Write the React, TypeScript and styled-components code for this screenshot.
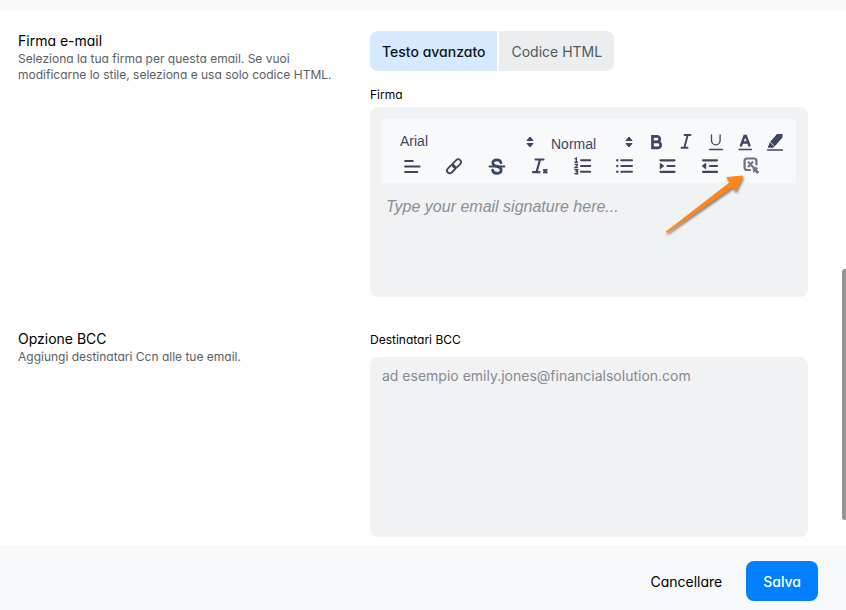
import React from "react";
import styled, { createGlobalStyle } from "styled-components";

const GlobalStyle = createGlobalStyle`
  *, *::before, *::after { box-sizing: border-box; }
  body {
    margin: 0;
    background: #ffffff;
    color: #101418;
    font-family: Inter, "Noto Sans", sans-serif;
    font-size: 14px;
  }
  button, select, textarea { font: inherit; color: inherit; margin: 0; }
`;

const Page = styled.div`
  position: relative;
  display: flex;
  flex-direction: column;
  min-height: 100vh;
  font-feature-settings: "cv11";
`;

const TopStrip = styled.div`
  height: 10px;
  background: #f8f9fb;
`;

const Content = styled.main`
  flex: 1;
  padding: 21px 38px 8px 18px;
  display: flex;
  flex-direction: column;
  gap: 32px;
`;

const Section = styled.section`
  display: grid;
  grid-template-columns: 320px minmax(0, 1fr);
  column-gap: 32px;
`;

const Title = styled.h2`
  margin: 0;
  font-size: 14px;
  line-height: 20px;
  font-weight: 400;
  color: #000000;
`;

const Hint = styled.p`
  margin: 0;
  font-size: 12px;
  line-height: 16px;
  color: #596066;
`;

const Tabs = styled.div`
  display: flex;
  gap: 2px;
  margin-bottom: 13px;
`;

const Tab = styled.button<{ $active?: boolean }>`
  height: 40px;
  padding: 0 12px;
  border: 0;
  font-weight: ${(p) => (p.$active ? 500 : 400)};
  background: ${(p) => (p.$active ? "#d6eaff" : "#ecedef")};
  color: ${(p) => (p.$active ? "#101418" : "#51585e")};
  &:first-child { border-radius: 8px 0 0 8px; }
  &:last-child { border-radius: 0 8px 8px 0; }
`;

const Label = styled.label<{ $spaced?: boolean }>`
  display: block;
  margin-bottom: ${(p) => (p.$spaced ? 6 : 1)}px;
  font-size: 12px;
  line-height: 22px;
  font-weight: 400;
  color: #000000;
`;

const Editor = styled.div`
  display: flex;
  flex-direction: column;
  min-height: 190px;
  padding: 12px;
  border-radius: 8px;
  background: #f1f2f4;
`;

const Toolbar = styled.div`
  height: 64px;
  padding: 14px 0 0;
  background: #f8f9fb;
  color: #3f465f;
`;

const PickerRow = styled.div`
  display: flex;
  align-items: flex-start;
  height: 24px;
  padding: 0 12px 0 18px;
`;

const IconRow = styled.div<{ $spread?: boolean }>`
  display: flex;
  justify-content: space-between;
  ${(p) => (p.$spread ? "padding: 0 36px 0 21px;" : "flex: 1; margin-left: 14px;")}
`;

const Picker = styled.span<{ $grow?: boolean; $height: number }>`
  position: relative;
  flex: ${(p) => (p.$grow ? "0 1 134px" : "0 0 82px")};
  margin-right: ${(p) => (p.$grow ? "17px" : "0")};

  select {
    display: block;
    width: 100%;
    height: ${(p) => p.$height}px;
    padding: 0;
    border: 0;
    appearance: none;
    background: transparent;
    font-family: "Liberation Sans", Arial, sans-serif;
    font-size: 14px;
  }
  svg {
    position: absolute;
    top: 3px;
    right: 0;
    pointer-events: none;
  }
`;

const IconButton = styled.button`
  position: relative;
  width: 18px;
  height: 18px;
  padding: 0;
  border: 0;
  background: transparent;
  svg { display: block; overflow: visible; }
`;

const Pointer = styled.svg`
  position: absolute;
  right: 15px;
  top: 18px;
  pointer-events: none;
  filter: drop-shadow(1px 2px 1px rgba(0, 0, 0, 0.45));
`;

const SignatureInput = styled.textarea`
  flex: 1;
  width: 100%;
  padding: 12px 4px;
  border: 0;
  resize: none;
  outline: 0;
  background: transparent;
  font-family: "Liberation Sans", Arial, sans-serif;
  font-size: 16px;
  line-height: 24px;
  &::placeholder { color: #8a8f96; font-style: italic; }
`;

const BccInput = styled.textarea`
  display: block;
  width: 100%;
  height: 180px;
  padding: 9px 12px;
  border: 0;
  border-radius: 8px;
  resize: none;
  outline: 0;
  background: #f1f2f4;
  line-height: 20px;
  font-feature-settings: normal;
  &::placeholder { color: #858a91; }
`;

const Footer = styled.footer`
  display: flex;
  justify-content: flex-end;
  align-items: center;
  gap: 7px;
  padding: 16px 28px 9px;
  background: #f8f9fb;
`;

const Action = styled.button<{ $primary?: boolean }>`
  height: 40px;
  padding: 0 17px;
  border: 0;
  border-radius: 8px;
  font-weight: ${(p) => (p.$primary ? 500 : 400)};
  background: ${(p) => (p.$primary ? "#0080ff" : "transparent")};
  color: ${(p) => (p.$primary ? "#ffffff" : "#000000")};
`;

const ScrollThumb = styled.div`
  position: absolute;
  top: 269px;
  right: 0;
  width: 4px;
  height: 251px;
  border-radius: 3px 0 0 3px;
  background: #949494;
`;

const Icon = ({ children }: { children: React.ReactNode }) => (
  <svg width="18" height="18" viewBox="0 0 18 18" fill="none" stroke="currentColor" strokeWidth="2" strokeLinecap="round" aria-hidden="true">
    {children}
  </svg>
);

const Caret = () => (
  <svg width="8" height="12" viewBox="0 0 8 12" fill="currentColor" stroke="currentColor" strokeLinejoin="round" aria-hidden="true">
    <path d="M4 1 7 4.500H1ZM4 11 7 7.500H1Z" />
  </svg>
);

const styleIcons: [string, React.ReactNode][] = [
  ["Grassetto", <path d="M5.500 3.300H10a2.800 2.800 0 0 1 0 5.600H5.500ZM5.500 8.900h5.200a3 3 0 0 1 0 6H5.500Z" strokeWidth="2.700" />],
  ["Corsivo", <path d="M7.500 2h6M4.500 14.800h6M10.700 2 7.300 14.800" strokeWidth="1.900" />],
  ["Sottolineato", <path d="M4.500 2v5.500a4.300 4.300 0 0 0 8.600 0V2M2.500 16.500h13" strokeWidth="1.300" />],
  ["Colore testo", <g><path d="M5 12.500 8.500 3h1.400l3.500 9.500M6.400 9.500H12" strokeWidth="2.400" /><path d="M3 16.500h12.500" strokeWidth="1.400" /></g>],
  ["Evidenziatore", <g><path d="M2 14 4 9 11 1h5.500v3.500L9.500 12.500 7 14.800H2Z" fill="currentColor" stroke="none" /><path d="m4.300 9.200 4 4" stroke="#f8f9fb" strokeWidth=".8" /><path d="M1.500 17h15" strokeWidth="1.400" /></g>],
];

const blockIcons: [string, React.ReactNode][] = [
  ["Allinea", <path d="M2.200 4h7.500M2.200 9.500h14.300M2.200 15h12" strokeWidth="2.200" />],
  ["Link", <g transform="rotate(-45 9 9)" strokeWidth="1.800"><rect x="0" y="6.400" width="9.500" height="5.600" rx="2.800" /><rect x="8" y="6.400" width="9.500" height="5.600" rx="2.800" /></g>],
  ["Barrato", <g><path d="M13 5.800C12.500 3.500 10.800 2.800 9 2.800c-2.400 0-4.200 1.200-4.200 3.200C4.800 10.500 13.200 8.300 13.200 13c0 2-1.700 3.300-4.200 3.300S4.800 15 4.500 13" strokeWidth="2.700" /><path d="M1.500 9.500h15" strokeWidth="1.800" /></g>],
  ["Rimuovi formato", <g><path d="M5.500 2.500h8M3 15.200h6.500M10 2.500 6.500 15.200" strokeWidth="2.200" /><path d="m14 13 2.500 2.500m0-2.500-2.500 2.500" strokeWidth="2.400" /></g>],
  ["Elenco numerato", <g><path d="M8 3.300h9.200M8 9h9.200M8 14.800h9.200" strokeWidth="2" /><path d="M2.100 1.600 3.300 1.100V4.800M2 5.200H4.500M2 7.400h2.300v1L2.100 10.600H4.500M2 12.800H4.500l-1.200 1.700H4.500v2.200H2" strokeWidth="1.400" /></g>],
  ["Elenco puntato", <g><path d="M6.300 3.300h10.700M6.300 9h10.700M6.300 14.800h10.700" /><path d="M2.300 3.300h0M2.300 9h0M2.300 14.800h0" strokeWidth="2.400" /></g>],
  ["Aumenta rientro", <g strokeWidth="2.200"><path d="M3.500 3.300h14M10.500 9h7M3.500 14.800h14" /><path d="m3.500 6.800 2.800 2.200-2.800 2.200Z" fill="currentColor" strokeWidth="1.400" strokeLinejoin="round" /></g>],
  ["Riduci rientro", <g strokeWidth="2.200"><path d="M3 3.300h14M10 9h7M3 14.800h14" /><path d="M5.500 6.800 2.700 9 5.500 11.200Z" fill="currentColor" strokeWidth="1.400" strokeLinejoin="round" /></g>],
];

export default function App() {
  return (
    <Page>
      <GlobalStyle />
      <TopStrip />
      <Content>
        <Section>
          <div>
            <Title>Firma e-mail</Title>
            <Hint>Seleziona la tua firma per questa email. Se vuoi modificarne lo stile, seleziona e usa solo codice HTML.</Hint>
          </div>
          <div>
            <Tabs>
              <Tab type="button" $active aria-pressed="true">Testo avanzato</Tab>
              <Tab type="button" aria-pressed="false">Codice HTML</Tab>
            </Tabs>
            <Label htmlFor="signature">Firma</Label>
            <Editor>
              <Toolbar role="toolbar">
                <PickerRow>
                  <Picker $grow $height={16}>
                    <select aria-label="Carattere"><option>Arial</option></select>
                    <Caret />
                  </Picker>
                  <Picker $height={22}>
                    <select aria-label="Dimensione"><option>Normal</option></select>
                    <Caret />
                  </Picker>
                  <IconRow>
                    {styleIcons.map(([name, art]) => (
                      <IconButton key={name} type="button" aria-label={name}><Icon>{art}</Icon></IconButton>
                    ))}
                  </IconRow>
                </PickerRow>
                <IconRow $spread>
                  {blockIcons.map(([name, art]) => (
                    <IconButton key={name} type="button" aria-label={name}><Icon>{art}</Icon></IconButton>
                  ))}
                  <IconButton type="button" aria-label="Personalizza">
                    <Icon>
                      <g stroke="#69708a">
                        <path d="M8 13H4.800a2.200 2.200 0 0 1-2.200-2.200V3.700a2.200 2.200 0 0 1 2.200-2.200h7.400a2.200 2.200 0 0 1 2.200 2.200V7.500" strokeWidth="2.200" />
                        <path d="m6.500 5.200 4 4.300m0-4.300-4 4.300" strokeWidth="2" />
                        <path d="m11 9.800 4.800 1.400-1.500 1.300 2.600 2.600-1.600 1.500-2.600-2.600-.8 1.200Z" fill="#69708a" strokeWidth=".8" />
                      </g>
                    </Icon>
                    <Pointer width="80" height="60" viewBox="0 0 80 60" aria-hidden="true">
                      <path d="M1 57 65 7.500 62 2.500 78 1 70.500 16 67.500 12 3 57Z" fill="#ff851b" stroke="#ff851b" strokeLinejoin="round" />
                    </Pointer>
                  </IconButton>
                </IconRow>
              </Toolbar>
              <SignatureInput id="signature" placeholder="Type your email signature here..." />
            </Editor>
          </div>
        </Section>
        <Section>
          <div>
            <Title>Opzione BCC</Title>
            <Hint>Aggiungi destinatari Ccn alle tue email.</Hint>
          </div>
          <div>
            <Label htmlFor="bcc" $spaced>Destinatari BCC</Label>
            <BccInput id="bcc" placeholder="ad esempio emily.jones@financialsolution.com" />
          </div>
        </Section>
      </Content>
      <Footer>
        <Action type="button">Cancellare</Action>
        <Action type="button" $primary>Salva</Action>
      </Footer>
      <ScrollThumb />
    </Page>
  );
}
